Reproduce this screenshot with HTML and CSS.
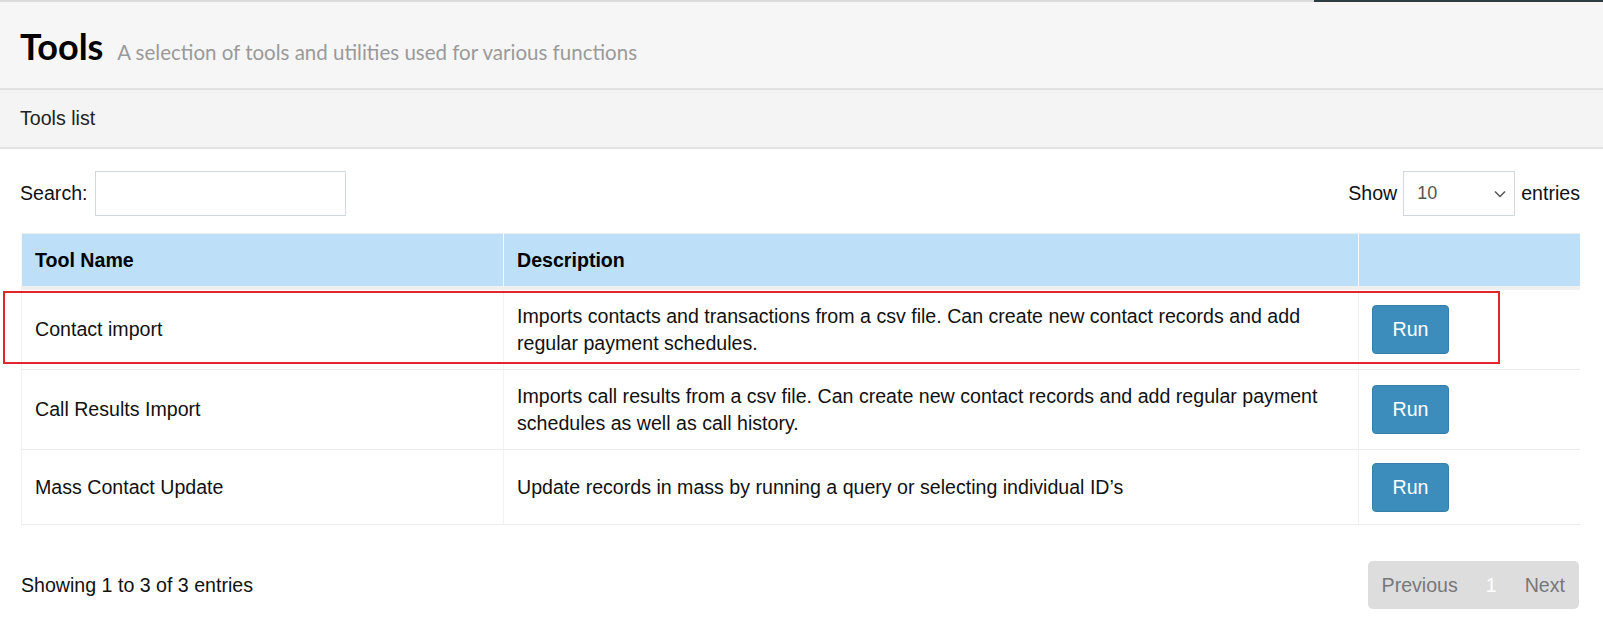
FILE: index.html
```html
<!DOCTYPE html>
<html lang="en">
<head>
<meta charset="utf-8">
<title>Tools</title>
<link rel="stylesheet" href="styles.css">
</head>
<body>
    <div class="topline">
        <span class="topline-light"></span>
        <span class="topline-dark"></span>
    </div>

    <section class="content-header">
        <h1>Tools <small>A selection of tools and utilities used for various functions</small></h1>
    </section>

    <div class="box">
        <div class="box-header">Tools list</div>

        <div class="box-body">
            <div class="dt-controls">
                <label class="dt-search">Search: <input type="text" class="dt-input"></label>
                <div class="dt-length">
                    Show
                    <div class="dt-select">
                        <span>10</span>
                        <svg width="12" height="8" viewBox="0 0 12 8"><path d="M1 1.5l5 5 5-5" fill="none" stroke="#555" stroke-width="1.5"/></svg>
                    </div>
                    entries
                </div>
            </div>

            <table class="dt-table">
                <thead>
                    <tr>
                        <th class="col-name">Tool Name</th>
                        <th class="col-desc">Description</th>
                        <th class="col-act"></th>
                    </tr>
                </thead>
                <tbody>
                    <tr>
                        <td>Contact import</td>
                        <td>Imports contacts and transactions from a csv file. Can create new contact records and add regular payment schedules.</td>
                        <td><button class="btn-run">Run</button></td>
                    </tr>
                    <tr>
                        <td>Call Results Import</td>
                        <td>Imports call results from a csv file. Can create new contact records and add regular payment schedules as well as call history.</td>
                        <td><button class="btn-run">Run</button></td>
                    </tr>
                    <tr>
                        <td>Mass Contact Update</td>
                        <td>Update records in mass by running a query or selecting individual ID’s</td>
                        <td><button class="btn-run">Run</button></td>
                    </tr>
                </tbody>
            </table>

            <div class="dt-footer">
                <div class="dt-info">Showing 1 to 3 of 3 entries</div>
                <div class="dt-paging">
                    <span class="pg-item">Previous</span>
                    <span class="pg-item pg-current">1</span>
                    <span class="pg-item">Next</span>
                </div>
            </div>
        </div>
    </div>

    <div class="highlight"></div>
</body>
</html>
```

FILE: styles.css
```css
*{
    box-sizing: border-box;
}
body{
    margin: 0;
    background: #fff;
    color: #111;
    font-family: "Liberation Sans", Arial, sans-serif;
    font-size: 19.6px;
    position: relative;
}
.topline{
    display: flex;
    height: 2px;
}
.topline-light{
    flex: 1;
    background: #dcdcdc;
}
.topline-dark{
    width: 289px;
    background: #2c3b41;
}
.content-header{
    background: #f6f6f6;
    border-bottom: 2px solid #e2e2e2;
    height: 88px;
    padding: 22px 20px 0;
}
.content-header h1{
    margin: 0;
    font-family: Lato, "Open Sans", sans-serif;
    font-size: 36px;
    font-weight: 700;
    color: #000;
    line-height: 44px;
}
.content-header small{
    font-size: 20.5px;
    font-weight: 400;
    color: #9a9a9a;
    margin-left: 5px;
}
.box-header{
    background: #f4f4f4;
    border-bottom: 2px solid #e2e2e2;
    height: 59px;
    line-height: 56px;
    padding: 0 20px;
    color: #222;
    font-size: 19.6px;
}
.box-body{
    padding: 22px 23px 0 21px;
}
.dt-controls{
    display: flex;
    justify-content: space-between;
    align-items: center;
    height: 45px;
}
.dt-search{
    display: flex;
    align-items: center;
    gap: 7px;
    margin-left: -1px;
}
.dt-input{
    width: 251px;
    height: 45px;
    border: 1px solid #d2d6de;
    font: inherit;
    padding: 0 10px;
}
.dt-length{
    display: flex;
    align-items: center;
    gap: 6px;
}
.dt-select{
    width: 112px;
    height: 45px;
    border: 1px solid #d2d6de;
    display: flex;
    align-items: center;
    justify-content: space-between;
    padding: 0 8px 0 13px;
    color: #555;
    font-size: 18px;
}
.dt-table{
    width: 100%;
    border-collapse: collapse;
    margin-top: 17px;
    border-top: 1px solid #ececec;
    border-left: 1px solid #f0f0f0;
}
.dt-table th{
    background: #bddff7;
    text-align: left;
    font-weight: 700;
    color: #000;
    line-height: 28px;
    padding: 12px 13px;
    border-left: 1px solid #f4f9fd;
    border-bottom: 4px solid #f0f0f0;
}
.col-name{
    width: 482px;
}
.col-desc{
    width: 855px;
}
.dt-table td{
    padding: 12.5px 13px;
    line-height: 27px;
    vertical-align: middle;
    border-left: 1px solid #f2f2f2;
    border-bottom: 1px solid #ececec;
}
.btn-run{
    background: #3c8dbc;
    border: 1px solid #367fa9;
    border-radius: 4px;
    color: #fff;
    font: inherit;
    line-height: 27px;
    padding: 10px 19.5px;
    cursor: pointer;
    vertical-align: middle;
}
.dt-footer{
    display: flex;
    justify-content: space-between;
    align-items: center;
    margin-top: 36px;
}
.dt-paging{
    display: flex;
    background: #ddd;
    border-radius: 5px;
    height: 48px;
    align-items: center;
    margin-right: 1px;
}
.pg-item{
    padding: 0 14px;
    color: #777;
}
.pg-current{
    color: #fff;
}
.highlight{
    position: absolute;
    left: 3px;
    top: 291px;
    width: 1497px;
    height: 73px;
    border: 2px solid #e0262c;
}
```
